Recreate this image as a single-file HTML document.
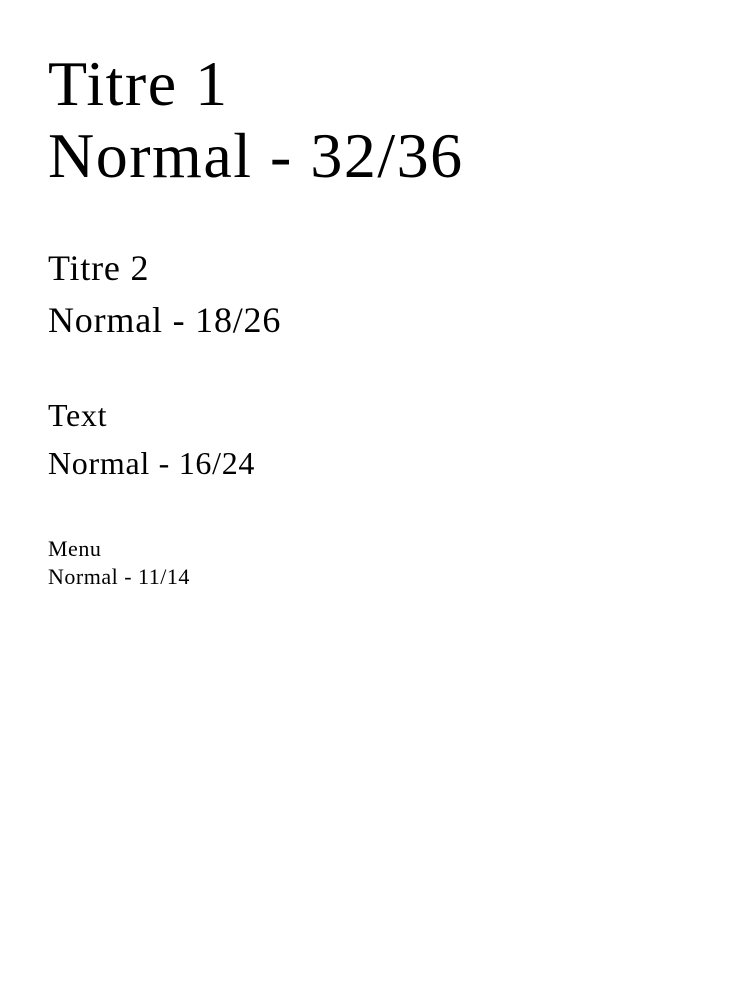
<!DOCTYPE html>
<html><head><meta charset="utf-8"><style>
html,body{margin:0;padding:0;background:#fff;width:750px;height:984px;overflow:hidden}
body{font-family:"Liberation Serif",serif;color:#000;position:relative}
.b{position:absolute;left:48px;white-space:nowrap}
.h1{top:48px;font-size:64px;line-height:72px;letter-spacing:1.5px}
.h2{top:242px;font-size:36px;line-height:52px;letter-spacing:0.8px}
.t{top:391px;font-size:32px;line-height:48px;letter-spacing:0.7px}
.m{top:535px;font-size:22px;line-height:28px;letter-spacing:0.5px}
</style></head><body>
<div class="b h1">Titre 1<br>Normal - 32/36</div>
<div class="b h2">Titre 2<br>Normal - 18/26</div>
<div class="b t">Text<br>Normal - 16/24</div>
<div class="b m">Menu<br>Normal - 11/14</div>
</body></html>
